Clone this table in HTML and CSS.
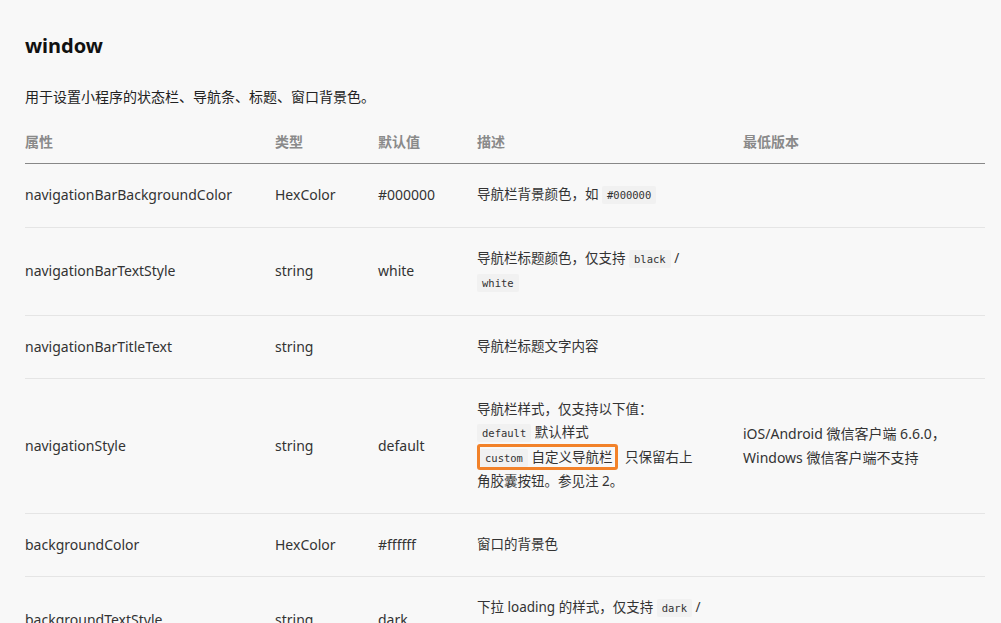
FILE: index.html
```html
<!DOCTYPE html>
<html lang="zh-CN">
<head>
<meta charset="utf-8">
<title>window</title>
<link rel="stylesheet" href="styles.css">
</head>
<body>
<main class="doc">
  <h3 class="title">window</h3>
  <p class="intro">用于设置小程序的状态栏、导航条、标题、窗口背景色。</p>
  <table class="props">
    <colgroup>
      <col class="c-name"><col class="c-type"><col class="c-def"><col class="c-desc"><col class="c-ver">
    </colgroup>
    <thead>
      <tr><th>属性</th><th>类型</th><th>默认值</th><th>描述</th><th>最低版本</th></tr>
    </thead>
    <tbody>
      <tr>
        <td>navigationBarBackgroundColor</td><td>HexColor</td><td>#000000</td>
        <td class="desc">导航栏背景颜色，如 <code>#000000</code></td><td></td>
      </tr>
      <tr>
        <td>navigationBarTextStyle</td><td>string</td><td>white</td>
        <td class="desc">导航栏标题颜色，仅支持 <code>black</code> / <code>white</code></td><td></td>
      </tr>
      <tr>
        <td>navigationBarTitleText</td><td>string</td><td></td>
        <td class="desc">导航栏标题文字内容</td><td></td>
      </tr>
      <tr>
        <td>navigationStyle</td><td>string</td><td>default</td>
        <td class="desc">导航栏样式，仅支持以下值：<br><code>default</code> 默认样式<br><span class="mark"><code>custom</code> 自定义导航栏</span> 只保留右上角胶囊按钮。参见注 2。</td>
        <td class="ver">iOS/Android 微信客户端 6.6.0，<br>Windows 微信客户端不支持</td>
      </tr>
      <tr>
        <td>backgroundColor</td><td>HexColor</td><td>#ffffff</td>
        <td class="desc">窗口的背景色</td><td></td>
      </tr>
      <tr>
        <td>backgroundTextStyle</td><td>string</td><td>dark</td>
        <td class="desc">下拉 loading 的样式，仅支持 <code>dark</code> / <code>light</code></td><td></td>
      </tr>
    </tbody>
  </table>
</main>
</body>
</html>
```

FILE: styles.css
```css
html, body {
  margin: 0;
  padding: 0;
  background: #f8f8f8;
}
body {
  font-family: "Segoe UI", "Noto Sans", "Noto Sans CJK SC", sans-serif;
  color: #333;
}
.doc {
  padding: 28px 16px 0 25px;
}
.title {
  margin: 0;
  font-size: 20px;
  line-height: 36px;
  font-weight: 700;
  color: #111;
}
.intro {
  margin: 21px 0 0;
  font-size: 14px;
  line-height: 22px;
  font-family: "Noto Sans CJK SC", sans-serif;
  color: #222;
}
.props {
  margin-top: 14px;
  width: 960px;
  border-collapse: collapse;
  table-layout: fixed;
}
.c-name { width: 250px; }
.c-type { width: 103px; }
.c-def { width: 99px; }
.c-desc { width: 266px; }
.c-ver { width: 242px; }
.props th {
  text-align: left;
  font-family: "Noto Sans CJK SC", sans-serif;
  font-size: 14px;
  font-weight: 700;
  color: #8a8a8a;
  padding: 8px 0 10px;
  line-height: 24px;
  border-bottom: 1px solid #888;
}
.props td {
  padding: 19px 28px 19px 0;
  font-size: 14px;
  line-height: 24px;
  vertical-align: middle;
  border-bottom: 1px solid #e5e5e5;
  color: #333;
}
.props td.desc, .props td.ver {
  font-family: "Noto Sans", "Noto Sans CJK SC", sans-serif;
  font-size: 13.5px;
  line-height: 23.5px;
}
.props td.desc {
  padding-right: 40px;
}
.props td.ver {
  font-size: 14px;
}
code {
  font-family: "DejaVu Sans Mono", monospace;
  font-size: 10.5px;
  background: #f1f1f1;
  padding: 3px 5px;
  border-radius: 2px;
  color: #333;
}
.mark {
  border: 3px solid #f2822a;
  border-radius: 3px;
  padding: 1px 3px 1px 0;
  margin-right: 3px;
}
```
